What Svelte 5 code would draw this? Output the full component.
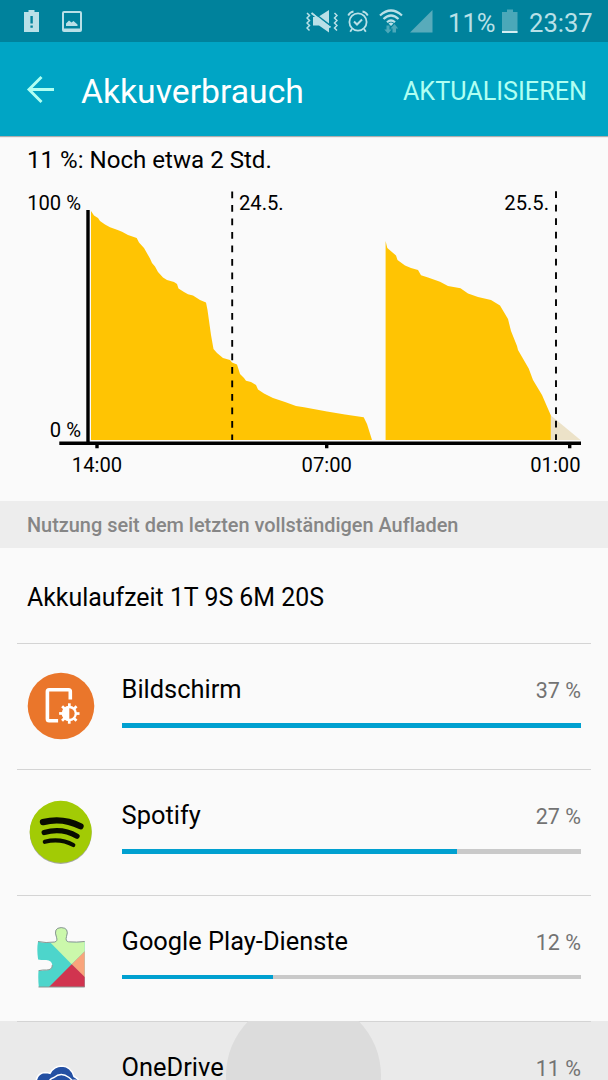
<script>
  const apps = [
    { id: "screen", name: "Bildschirm", percent: 37, bar: 100 },
    { id: "spotify", name: "Spotify", percent: 27, bar: 73 },
    { id: "play", name: "Google Play-Dienste", percent: 12, bar: 33 },
    { id: "onedrive", name: "OneDrive", percent: 11, bar: 30, pressed: true },
  ];

  const firstCharge =
    "91,440 91,211 94,215.5 98,218 100,221 105,224.5 110,227.3 117,229.7 122,231.7 128,235 136.7,238 139,242.5 144,248 150,258.5 152,263 155,266.5 158,272 163,277.5 167,280 174,282 177,284 178.5,288.5 184,292 188,294.3 193,295.5 200,300 206,302.5 207.5,310 211,335 213.5,349 217,353 223,358 230,360 232,362.5 237,364.5 240,374 244,378 246,380.7 251,382 256,385 258,389.5 264,393.5 273,398 285,402 296,406 304,407.3 327,411.5 345,414.5 363.7,417.3 367,424 372,440";
  const secondCharge =
    "385.6,440 385.6,241 387.3,248 396,255.5 397.5,260 405,265.5 411,268 418,270 421,275.3 428,277.5 440,281.7 448,286 460.5,288.3 468,293.5 478,297 491,300 500,305.5 508,319 511,331 517,346 518,350 528.7,368.5 533,380 542,395 550.9,415.5 550.9,440";
  const teeth = [0, 45, 90, 135, 180, 225, 270, 315];
</script>

<main>
  <div class="status">
    <svg class="warn" width="16" height="24" viewBox="0 0 16 24">
      <path d="M4.5 1h6v2H15v20H0V3h4.500z" fill="#b9e0e7" />
      <path d="M6.400 7h2.400v7.500H6.400zM6.400 16.500h2.400v2.300H6.400z" fill="#00829c" />
    </svg>
    <svg class="photo" width="20" height="22" viewBox="0 0 20 22">
      <path
        fill-rule="evenodd"
        d="M2 0h16a2 2 0 0 1 2 2v17a2 2 0 0 1-2 2H2a2 2 0 0 1-2-2V2a2 2 0 0 1 2-2zM2 2v15.500h16V2z"
        fill="#b9e0e7"
      />
      <path d="M4 15v-2.500l3-3 2.500 2 2-1.500 4 3.500V15z" fill="#b9e0e7" />
    </svg>
    <div class="right">
      <svg width="32" height="24" viewBox="0 0 32 24">
        <path d="M12 8l11-7v14.500zM7 8h5l11 10v5.500l-10-7H7z" fill="#b9e0e7" />
        <path d="M5.500 4l19 14.500" stroke="#b9e0e7" stroke-width="2" />
        <path d="M9.500 5l15 11.500" stroke="#00829c" stroke-width="1.300" />
        <path
          d="M1 4l2.500 2.500L1 9l2.500 2.500L1 14l2.500 2.500L1 19l2.500 2.500M28.500 4L31 6.500 28.500 9l2.500 2.500-2.500 2.500 2.500 2.500-2.500 2.500 2.500 2.500"
          fill="none"
          stroke="#b9e0e7"
          stroke-width="1.500"
        />
      </svg>
      <svg class="alarm" width="22" height="24" viewBox="0 0 22 24">
        <g fill="none" stroke="#b9e0e7" stroke-width="1.800">
          <circle cx="11" cy="13" r="8.600" />
          <path d="M1.200 6.500Q3 3 6.500 2.500M20.800 6.500Q19 3 15.500 2.500M5 20l-1.800 2.800M17 20l1.800 2.800" />
          <path d="M7 12.500l3 3 5-5" stroke-width="2" />
        </g>
      </svg>
      <svg class="wifi" width="24" height="25" viewBox="0 0 24 25">
        <g fill="none" stroke="#b9e0e7" stroke-width="2.200">
          <path d="M1 6.500q11-10 22 0M4.500 10q7.500-7 15 0M8 13.300q4-3.600 8 0" />
        </g>
        <path d="M9.500 14.500q2.500-2 5 0L12 17z" fill="#b9e0e7" />
        <path d="M7.500 16.500h3v4h2.200L9 24.500l-3.700-4h2.200zM13.500 23.500v-4h-2L15.500 15l3.700 4.500h-2.200v4z" fill="#4ba8b9" />
      </svg>
      <svg class="signal" width="23" height="23" viewBox="0 0 23 23">
        <path d="M0 22.500L22.500 0v22.500z" fill="#58abbb" />
      </svg>
      <span class="charge">11%</span>
      <svg width="16" height="24" viewBox="0 0 16 24">
        <path d="M5 .500h6V3h4.500v21H0V3h5z" fill="#4ba8b9" />
        <path d="M0 22h15.500v2H0z" fill="#d5eef2" />
      </svg>
      <span class="clock">23:37</span>
    </div>
  </div>

  <header>
    <svg width="28" height="28" viewBox="0 0 28 28">
      <path d="M28 14.500H2.500M15.500 2L3 14.500 15.500 27" fill="none" stroke="#b0fff2" stroke-width="2.900" />
    </svg>
    <h1>Akkuverbrauch</h1>
    <button>AKTUALISIEREN</button>
  </header>

  <p class="remaining">11 %: Noch etwa 2 Std.</p>

  <svg class="chart" width="608" height="321" viewBox="0 180 608 321">
    <polygon points={firstCharge} fill="#ffc403" />
    <polygon points={secondCharge} fill="#ffc403" />
    <polygon points="550.9,440 550.9,415.5 580.500,440" fill="#ece2c8" />
    <path d="M232.200 191.600V440M556 191.200V440" stroke="#000" stroke-width="1.900" stroke-dasharray="6.700 6.800" />
    <path d="M88 210v233M59.300 443.300H581" stroke="#000" stroke-width="3.400" />
    <path d="M97 444v4.300M326.700 444v4.300M569.700 444v4.300" stroke="#000" stroke-width="3.400" />
    <text x="81" y="210" text-anchor="end">100 %</text>
    <text x="81" y="437" text-anchor="end">0 %</text>
    <text x="239" y="210">24.5.</text>
    <text x="549" y="210" text-anchor="end">25.5.</text>
    <text x="97" y="472" text-anchor="middle">14:00</text>
    <text x="326.700" y="472" text-anchor="middle">07:00</text>
    <text x="580.500" y="472" text-anchor="end">01:00</text>
  </svg>

  <h2>Nutzung seit dem letzten vollständigen Aufladen</h2>
  <p class="runtime">Akkulaufzeit 1T 9S 6M 20S</p>

  <ul>
    {#each apps as app}
      <li class:pressed={app.pressed}>
        {#if app.pressed}
          <span class="ripple"></span>
        {/if}
        <svg class="icon" width="72" height="72" viewBox="0 0 72 72">
          {#if app.id === "screen"}
            <circle cx="36" cy="36" r="33.300" fill="#ea762b" />
            <path
              d="M45.300 29.500V21.500q0-1.700-1.700-1.700H24.100q-1.700 0-1.700 1.700V49q0 1.700 1.700 1.700h9"
              fill="none"
              stroke="#fff"
              stroke-width="3.600"
            />
            <g fill="#fff">
              {#each teeth as angle}
                <rect x="43" y="33.300" width="2.700" height="5" transform="rotate({angle} 44.300 43.500)" />
              {/each}
              <circle cx="44.300" cy="43.500" r="7.700" />
            </g>
            <path d="M44.300 38.200a5.300 5.300 0 0 1 0 10.600z" fill="#ea762b" />
          {:else if app.id === "spotify"}
            <circle cx="35.700" cy="36.900" r="31" fill="#a5a8a0" />
            <circle cx="35.700" cy="35.800" r="31" fill="#a2cb05" />
            <g fill="none" stroke="#080c00" stroke-linecap="round">
              <path d="M18 26.100Q37.500 21 55.500 30.200" stroke-width="6.300" />
              <path d="M19.200 36.500Q37 31.500 52 40.200" stroke-width="5.300" />
              <path d="M19.800 45.800Q35.500 42 48.300 49" stroke-width="4.200" />
            </g>
          {:else if app.id === "play"}
            <defs>
              <clipPath id="piece">
                <path
                  d="M13 19.700q8 1.800 16.500.5 3.500-.8 2-4.700-3.500-9.500 4.700-9.700 8.300.2 5.300 9-1.500 4.500 2 5.200 8 .7 16.200-.3V65H13.800q-.9-9-.3-16 4.500-1 8-.7 5.800 0 5.800-5-.5-5-6-5.300-4 .3-8.200-.5-1.500-10-.1-17.800z"
                />
              </clipPath>
            </defs>
            <g clip-path="url(#piece)">
              <path d="M0 0h72v72H0z" fill="#4dd5cb" />
              <path d="M5 0h60v24L46.700 42.300z" fill="#cbf8ab" />
              <path d="M46.700 42.300L65 24v37z" fill="#f9a47b" />
              <path d="M46.700 42.300L17 72h60z" fill="#d1344f" />
            </g>
            <path
              d="M13 19.500q8 1.800 16.500.5 3.500-.8 2-4.700-3.500-9.500 4.700-9.700 8.300.2 5.300 9-1.500 4.500 2 5.200 8 .7 16.200-.3M13.500 48.700q4.500-1 8-.7 5.800 0 5.800-5M13.500 65h46.200"
              fill="none"
              stroke="#8c9591"
              stroke-width="1"
            />
          {:else}
            <g fill="#2450a3" stroke="#fff" stroke-width="1.500">
              <path d="M11 44V34Q12 25 20 24.500q3 0 5 .800Q29 18 37 18q9 .5 12 10.500 8 4 8 15z" />
              <path d="M23 46V36.500q1-6 6-7 7-6 15 0 2 1.500 3 3 8-1.500 9.500 5v8z" />
            </g>
          {/if}
        </svg>
        <div class="usage">
          <div class="line">
            <span class="name">{app.name}</span>
            <span class="percent">{app.percent} %</span>
          </div>
          <div class="track">
            <div class="fill" style="width: {app.bar}%"></div>
          </div>
        </div>
      </li>
    {/each}
  </ul>
</main>

<style>
  :global(body) {
    background: #fafafa;
    overflow: hidden;
  }
  main {
    height: 1080px;
    width: 608px;
    overflow: hidden;
    font-family: Roboto, sans-serif;
    font-variant-ligatures: none;
    color: #000;
  }
  svg {
    display: block;
    flex: none;
  }
  .status {
    display: flex;
    box-sizing: border-box;
    height: 42px;
    padding: 9px 15px 0 24px;
    background: #00829c;
    color: #b9e0e7;
  }
  .photo {
    margin: 2px 0 0 22px;
  }
  .right {
    display: flex;
    margin-left: auto;
    font-size: 25.6px;
    line-height: 28px;
  }
  .alarm {
    margin-left: 9px;
  }
  .wifi {
    margin-left: 10px;
  }
  .signal {
    margin: 1px 0 0 7px;
  }
  .charge {
    width: 54px;
    margin-left: 15px;
  }
  .clock {
    width: 64px;
    margin-left: 11px;
  }
  header {
    display: flex;
    align-items: center;
    box-sizing: border-box;
    height: 94px;
    padding: 0 21px 0 26px;
    background: #00a5c5;
    box-shadow: 0 1px 1px rgba(0, 0, 0, 0.3);
  }
  h1 {
    margin: 4px 0 0 27px;
    font-size: 33.7px;
    font-weight: 400;
    color: #fff;
  }
  button {
    margin: 4px 0 0 auto;
    padding: 0;
    border: 0;
    background: none;
    font: 25.2px Roboto, sans-serif;
    color: #b0fff2;
  }
  .remaining {
    height: 44px;
    margin: 0;
    padding-left: 27px;
    font-size: 24.1px;
    line-height: 48px;
  }
  .chart {
    font-size: 20.2px;
  }
  h2 {
    height: 47px;
    margin: 0;
    padding-left: 27px;
    background: #ededed;
    font-size: 19.9px;
    font-weight: 500;
    line-height: 50px;
    color: #868686;
  }
  .runtime {
    height: 95.4px;
    margin: 0;
    padding-left: 27px;
    font-size: 24.9px;
    line-height: 100px;
  }
  ul {
    margin: 0;
    padding: 0;
    list-style: none;
  }
  li {
    position: relative;
    display: flex;
    box-sizing: border-box;
    height: 125.8px;
    padding: 27px 27px 0 25px;
    overflow: hidden;
  }
  li::before {
    content: "";
    position: absolute;
    top: 0;
    left: 17px;
    right: 17px;
    height: 1px;
    background: #d4d4d4;
  }
  .pressed {
    background: #eaeaea;
  }
  .icon {
    position: relative;
  }
  .ripple {
    position: absolute;
    top: -23px;
    left: 226px;
    width: 155px;
    height: 155px;
    border-radius: 50%;
    background: #dcdcdc;
  }
  .usage {
    position: relative;
    flex: 1;
    margin-left: 24.6px;
    padding-top: 4px;
  }
  .line {
    display: flex;
    justify-content: space-between;
    align-items: baseline;
    height: 30px;
    line-height: 30px;
  }
  .name {
    font-size: 25.4px;
  }
  .percent {
    font-size: 21.5px;
    color: #737373;
  }
  .track {
    height: 4.5px;
    margin-top: 19px;
    background: #c9c9c9;
  }
  .fill {
    height: 100%;
    background: #00a0d0;
  }
</style>
